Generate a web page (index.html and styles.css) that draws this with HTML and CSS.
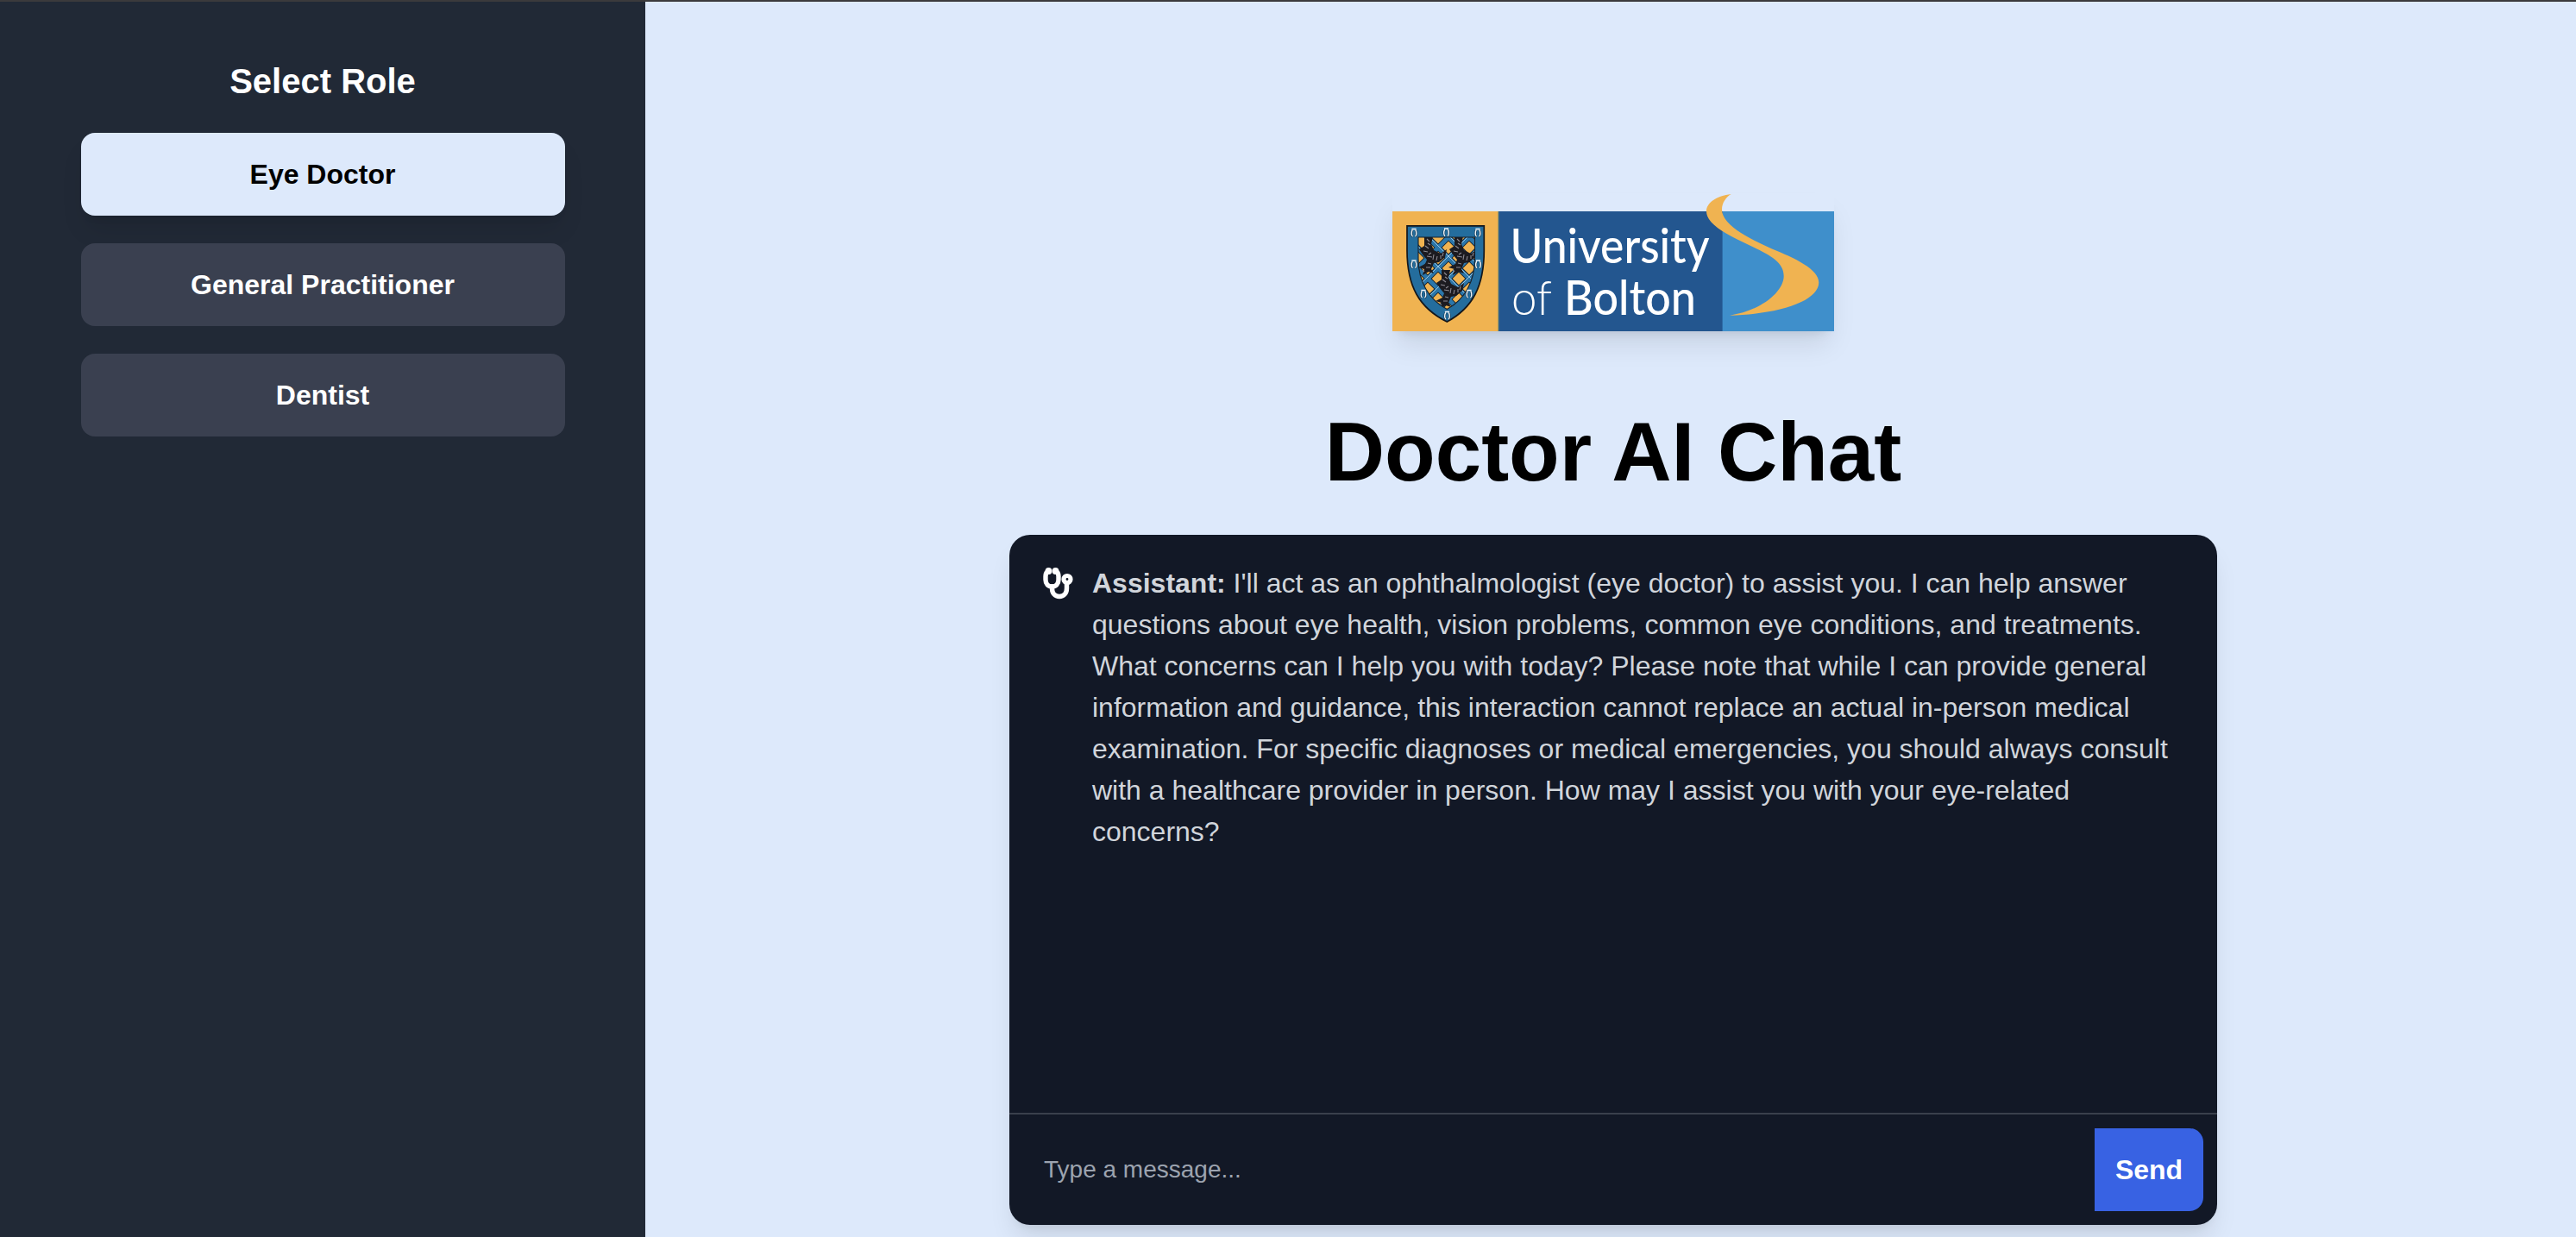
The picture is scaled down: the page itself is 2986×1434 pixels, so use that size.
FILE: index.html
```html
<!DOCTYPE html>
<html lang="en">
<head>
<meta charset="utf-8">
<title>Doctor AI Chat</title>
<link rel="stylesheet" href="styles.css">
</head>
<body>
<div class="app">
  <aside class="sidebar">
    <h2 class="sidebar-title">Select Role</h2>
    <nav class="roles">
      <button class="role role-active">Eye Doctor</button>
      <button class="role">General Practitioner</button>
      <button class="role">Dentist</button>
    </nav>
  </aside>
  <main class="main">
    <svg class="logo" viewBox="0 0 512 160" role="img" aria-label="University of Bolton">
      <defs>
        <clipPath id="field"><path d="M30 51H95.5V76C95.5 102 84 123 63.3 134.5C42 123 30 102 30 76Z"/></clipPath>
        <g id="horn">
          <path d="M-1.800 -3.500C-3.400 -1 -3 3.500 -1.400 4.200M1.800 -3.500C3.400 -1 3 3.500 1.400 4.200" fill="none" stroke="#173a55" stroke-width="2.600"/>
          <path d="M-1.800 -3.500C-3.400 -1 -3 3.500 -1.400 4.200M1.800 -3.500C3.400 -1 3 3.500 1.400 4.200M-2.600 -4.500H2.600" fill="none" stroke="#f2f7fa" stroke-width="1.400"/>
        </g>
        <g id="beast">
          <path d="M-7 -22L3 -22L1 -13L4 -6L12 -2L19 -7L17 2L10 8L4 9L1 16L4 21L-2 19L-9 23L-7 16L-14 14L-6 10L-4 5L-9 -1L-13 -7L-7 -11Z" fill="#1c1b20"/>
          <path d="M-4 -19L-1 -16M-6 -11L-2 -8M-8 -5L-3 -4M-4 1L2 2M4 -1L3 5M8 1L7 6M12 0L12 4M-3 9L1 10M-5 14L0 14M-2 -1L1 -3M-9 17L-7 19M0 -12L-3 -14M15 -3L14 1" stroke="#8e8b93" stroke-width="1.100" fill="none"/>
        </g>
      </defs>
      <rect x="0" y="21" width="123" height="139" fill="#f0b351"/>
      <rect x="123" y="21" width="260" height="139" fill="#23568f"/>
      <rect x="382.600" y="21" width="129.400" height="139" fill="#3f8fcb"/>
      <path d="M123 21V160" stroke="#5c7f72" stroke-width="1"/>
      <path d="M17 37.900H106.300V66C106.300 108 93 133 63.300 149C31 133 17 108 17 66Z" fill="#246d9d" stroke="#14171b" stroke-width="1.700"/>
      <g clip-path="url(#field)">
        <rect x="28" y="49" width="70" height="88" fill="#f0b351"/>
        <g stroke="#16202a" stroke-width="6.600">
          <path d="M20 30L110 120M20 54L110 144M20 78L110 168M44 30L134 120M68 30L158 120"/>
          <path d="M110 30L20 120M110 54L20 144M110 78L20 168M86 30L-4 120M110 102L20 192"/>
        </g>
        <g stroke="#2b76aa" stroke-width="5">
          <path d="M20 30L110 120M20 54L110 144M20 78L110 168M44 30L134 120M68 30L158 120"/>
          <path d="M110 30L20 120M110 54L20 144M110 78L20 168M86 30L-4 120M110 102L20 192"/>
        </g>
        <g stroke="#a9cde4" stroke-width=".9">
          <path d="M21 29L111 119M21 53L111 143M45 29L135 119"/>
          <path d="M109 29L19 119M109 53L19 143M109 77L19 167"/>
        </g>
        <use href="#beast" x="44" y="72"/>
        <use href="#beast" x="79" y="72"/>
        <use href="#beast" x="64" y="111"/>
      </g>
      <path d="M30 51H95.500V76C95.500 102 84 123 63.300 134.500C42 123 30 102 30 76Z" fill="none" stroke="#16202a" stroke-width="1.100"/>
      <use href="#horn" x="25" y="46"/><use href="#horn" x="62.500" y="45.500"/><use href="#horn" x="99" y="46"/>
      <use href="#horn" x="25" y="82.500"/><use href="#horn" x="99.500" y="82.500"/>
      <use href="#horn" x="36" y="117"/><use href="#horn" x="89" y="117"/><use href="#horn" x="63.500" y="142"/>
      <text class="logo-text" x="136.500" y="80.700" textLength="231" lengthAdjust="spacingAndGlyphs">University</text>
      <text class="logo-text logo-light" x="138" y="140.700" textLength="47" lengthAdjust="spacingAndGlyphs">of</text>
      <text class="logo-text" x="199" y="140.700" textLength="153" lengthAdjust="spacingAndGlyphs">Bolton</text>
      <path d="M392.700 1C376 3 364 11 364 21C364 34 382 45 406 56.500C434 70 453.700 78 453.700 96C453.700 114 428 136 391 141.700C452 140 494.300 124 494.300 103.500C494.300 88 466 75 440 64.500C410 51 382 36 382 19C382 11 387 4 392.700 1Z" fill="#f0b351"/>
    </svg>
    <h1 class="title">Doctor AI Chat</h1>
    <section class="chat">
      <div class="messages">
        <div class="message">
          <svg class="steth" viewBox="0 0 36 38">
            <g fill="none" stroke="#fff" stroke-width="5.400" stroke-linecap="round">
              <path d="M6.500 5C3.500 6 3 8 3 11V15C3 20 6 23 10.500 23S18 20 18 15V11C18 8 17.500 6 14.500 5"/>
              <path d="M10.500 23V25C10.500 31 14 34.500 19 34.500S27.500 31 27.500 25V19"/>
            </g>
            <circle cx="28" cy="14.500" r="4" fill="none" stroke="#fff" stroke-width="5.200"/>
            <circle cx="6.500" cy="5" r="3.900" fill="#fff"/><circle cx="14.500" cy="5" r="3.900" fill="#fff"/>
          </svg>
          <p class="message-text"><strong>Assistant:</strong> I'll act as an ophthalmologist (eye doctor) to assist you. I can help answer questions about eye health, vision problems, common eye conditions, and treatments. What concerns can I help you with today? Please note that while I can provide general information and guidance, this interaction cannot replace an actual in-person medical examination. For specific diagnoses or medical emergencies, you should always consult with a healthcare provider in person. How may I assist you with your eye-related concerns?</p>
        </div>
      </div>
      <form class="composer">
        <input class="composer-input" type="text" placeholder="Type a message...">
        <button class="send" type="button">Send</button>
      </form>
    </section>
  </main>
</div>
</body>
</html>
```
FILE: styles.css
```css
* { box-sizing: border-box; margin: 0; }

body {
  font-family: "Liberation Sans", Arial, sans-serif;
  background: #dde9fb;
  overflow: hidden;
}

.app {
  display: flex;
  height: 1434px;
  border-top: 2px solid #3b3a3c;
}

.sidebar {
  display: flex;
  flex-direction: column;
  align-items: center;
  flex: none;
  width: 748px;
  padding-top: 64px;
  background: #212936;
}

.sidebar-title {
  font-size: 40px;
  line-height: 56px;
  color: #fff;
}

.roles {
  display: flex;
  flex-direction: column;
  gap: 32px;
  width: 75%;
  margin-top: 32px;
}

.role {
  height: 96px;
  border: 0;
  border-radius: 16px;
  background: #3a4050;
  color: #fff;
  font: bold 32px/48px "Liberation Sans", Arial, sans-serif;
}

.role-active {
  background: #dde9fb;
  color: #000;
  box-shadow: 0 20px 30px -6px rgba(0, 0, 0, .1), 0 8px 12px -8px rgba(0, 0, 0, .1);
}

.main {
  display: flex;
  flex-direction: column;
  align-items: center;
  flex: 1;
  padding-top: 222px;
  padding-left: 6px;
}

.logo {
  flex: none;
  width: 512px;
  height: 160px;
  box-shadow: 0 20px 30px -6px rgba(0, 0, 0, .1), 0 8px 12px -8px rgba(0, 0, 0, .1);
}

.logo-text {
  font-family: Lato, sans-serif;
  font-size: 56px;
  font-weight: 500;
  fill: #fff;
}

.logo-light { font-weight: 300; }

.title {
  margin-top: 92px;
  font-size: 96px;
  line-height: 96px;
  color: #000;
}

.chat {
  display: flex;
  flex-direction: column;
  flex: none;
  width: 1400px;
  height: 800px;
  margin-top: 48px;
  border-radius: 24px;
  background: #121826;
  box-shadow: 0 20px 30px -6px rgba(0, 0, 0, .1), 0 8px 12px -8px rgba(0, 0, 0, .1);
}

.messages {
  flex: 1;
  padding: 32px 40px;
}

.message {
  display: flex;
  align-items: flex-start;
}

.steth {
  flex: none;
  width: 36px;
  height: 38px;
  margin: 5px 21px 0 -1px;
}

.message-text {
  flex: 1;
  font-size: 32px;
  line-height: 48px;
  color: #d1d5db;
}

.composer {
  display: flex;
  height: 130px;
  padding: 16px;
  border-top: 2px solid #3a404c;
}

.composer-input {
  flex: 1;
  padding: 0 24px;
  border: 0;
  background: transparent;
  color: #fff;
  font: 28px/40px "Liberation Sans", Arial, sans-serif;
}

.composer-input::placeholder { color: #9ca3af; }

.send {
  width: 126px;
  height: 96px;
  padding: 0;
  border: 0;
  border-radius: 0 16px 16px 0;
  background: #3862e3;
  color: #fff;
  font: bold 32px/48px "Liberation Sans", Arial, sans-serif;
}
```
